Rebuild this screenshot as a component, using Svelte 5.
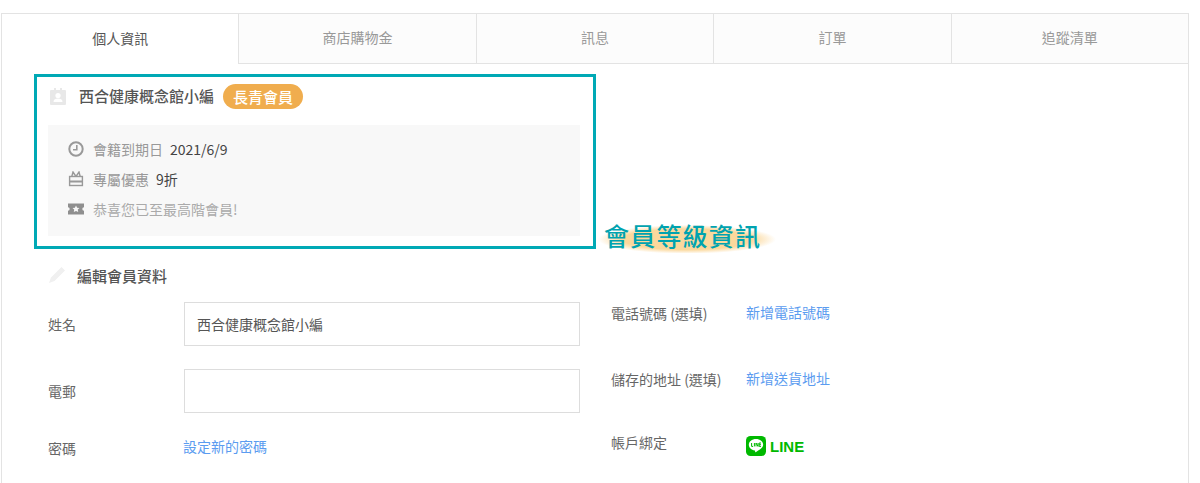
<script>
  const tabs = ['個人資訊', '商店購物金', '訊息', '訂單', '追蹤清單'];
  const activeTab = '個人資訊';
  let name = '西合健康概念館小編';
</script>

<div class="panel">
  <ul class="tabs">
    {#each tabs as tab}
      <li class:active={tab === activeTab}>{tab}</li>
    {/each}
  </ul>

  <section class="member">
    <div class="member-head">
      <svg class="id-icon" width="16" height="17" viewBox="0 0 16 17">
        <path fill="#e8e8e8" d="M1 2h3V0h2v2h4V0h2v2h3a1 1 0 0 1 1 1v13a1 1 0 0 1-1 1H1a1 1 0 0 1-1-1V3a1 1 0 0 1 1-1z" />
        <circle cx="8" cy="7.5" r="2.6" fill="#fff" />
        <path fill="#fff" d="M3.5 14c0-2.4 2-3.4 4.500-3.400s4.500 1 4.500 3.400z" />
      </svg>
      <span class="member-name">{name}</span>
      <span class="badge">長青會員</span>
    </div>
    <div class="perks">
      <div class="perk">
        <svg width="16" height="16" viewBox="0 0 16 16">
          <circle cx="8" cy="8" r="6.700" fill="none" stroke="#999" stroke-width="2" />
          <path d="M8.800 4v4.800H5" fill="none" stroke="#999" stroke-width="1.600" />
        </svg>
        <span class="label">會籍到期日</span>
        <span class="value">2021/6/9</span>
      </div>
      <div class="perk">
        <svg width="16" height="16" viewBox="0 0 16 16">
          <rect x="1.600" y="5.500" width="12.800" height="9" fill="none" stroke="#999" stroke-width="1.400" />
          <path d="M1.600 10.500h12.800" stroke="#999" stroke-width="2" />
          <path d="M8 5.500 5 1 3.800 5.500M8 5.500 11 1l1.200 4.500" fill="none" stroke="#999" stroke-width="1.400" />
        </svg>
        <span class="label">專屬優惠</span>
        <span class="value">9折</span>
      </div>
      <div class="perk">
        <svg width="16" height="16" viewBox="0 0 16 16">
          <path fill="#8f8f8f" d="M0 2.500h16v3.800a1.700 1.700 0 0 0 0 3.400v3.800H0V9.700a1.700 1.700 0 0 0 0-3.400z" />
          <path fill="#f7f7f7" d="m8 4.500 1.100 2.200 2.400.3-1.700 1.600.4 2.400L8 9.900 5.800 11l.4-2.400L4.500 7l2.400-.3z" />
        </svg>
        <span class="label light">恭喜您已至最高階會員!</span>
      </div>
    </div>
  </section>

  <div class="callout">會員等級資訊</div>

  <section class="edit">
    <h3>
      <svg width="18" height="18" viewBox="0 0 18 18">
        <path fill="#f0f0f0" d="M13.500 1 17 4.500 6.500 15 1 17l2-5.500z" />
      </svg>
      編輯會員資料
    </h3>
    <div class="form">
      <div class="col-left">
        <div class="row">
          <span class="field-label">姓名</span>
          <input type="text" bind:value={name} />
        </div>
        <div class="row">
          <span class="field-label">電郵</span>
          <input type="text" />
        </div>
        <div class="row plain">
          <span class="field-label">密碼</span>
          <a href="#password">設定新的密碼</a>
        </div>
      </div>
      <div class="col-right">
        <div class="info">
          <span class="field-label">電話號碼 (選填)</span>
          <a href="#phone">新增電話號碼</a>
        </div>
        <div class="info">
          <span class="field-label">儲存的地址 (選填)</span>
          <a href="#address">新增送貨地址</a>
        </div>
        <div class="info last">
          <span class="field-label">帳戶綁定</span>
          <span class="line">
            <svg width="20" height="20" viewBox="0 0 20 20">
              <rect width="20" height="20" rx="4.500" fill="#00b900" />
              <path fill="#fff" d="M10 3c-4 0-7.200 2.600-7.200 5.800 0 2.900 2.500 5.200 6 5.700.5.100.4.600.3 1.300 0 .5.500.5 1 .2 1.600-1 7.100-3.900 7.100-7.200C17.200 5.600 14 3 10 3z" />
              <path fill="none" stroke="#00b900" stroke-width="1" d="M5.600 7v3.400h1.500M8.400 7v3.400M10 10.400V7l2 3.400V7M15 7h-1.800v3.400H15M13.200 8.700H15" />
            </svg>
            <span class="line-word">LINE</span>
          </span>
        </div>
      </div>
    </div>
  </section>
</div>

<style>
  :global(body) {
    background: #fff;
    font-family: "Noto Sans CJK TC", "Noto Sans", sans-serif;
    overflow: hidden;
  }

  .panel {
    position: relative;
    box-sizing: border-box;
    width: 1188px;
    height: 470px;
    margin: 13px 0 0 1px;
    border: 1px solid #e3e3e3;
    border-bottom: 0;
    overflow: hidden;
  }

  .tabs {
    display: flex;
    height: 50px;
    margin: 0;
    padding: 0;
    list-style: none;
  }

  .tabs li {
    flex: 1;
    display: flex;
    align-items: center;
    justify-content: center;
    box-sizing: border-box;
    padding-bottom: 3px;
    background: #fcfcfc;
    border-left: 1px solid #e3e3e3;
    border-bottom: 1px solid #e3e3e3;
    color: #999;
    font-size: 14px;
  }

  .tabs li:first-child {
    border-left: 0;
  }

  .tabs li.active {
    background: #fff;
    border-bottom: 0;
    color: #555;
  }

  .member {
    box-sizing: border-box;
    width: 562px;
    height: 175px;
    margin: 10px 0 0 32px;
    padding: 0 13px 0 11px;
    border: 3px solid #00a9b5;
  }

  .member-head {
    display: flex;
    align-items: center;
    height: 38px;
    padding-left: 2px;
    margin-bottom: 10px;
  }

  .id-icon {
    margin-right: 13px;
  }

  .member-name {
    color: #555;
    font-size: 15px;
    font-weight: 500;
    line-height: 20px;
  }

  .badge {
    margin-left: 9px;
    padding: 0 10px;
    height: 25px;
    line-height: 25px;
    border-radius: 13px;
    background: #f0ad4e;
    color: #fff;
    font-size: 15px;
    font-weight: 500;
  }

  .perks {
    display: flex;
    flex-direction: column;
    gap: 10px;
    height: 111px;
    box-sizing: border-box;
    padding: 14px 20px 0;
    background: #f8f8f8;
  }

  .perk {
    display: flex;
    align-items: center;
    height: 20px;
    font-size: 14px;
  }

  .perk svg {
    margin-right: 9px;
  }

  .label {
    color: #999;
    margin-right: 7px;
  }

  .label.light {
    color: #aaa;
  }

  .value {
    color: #444;
  }

  .callout {
    position: absolute;
    left: 596px;
    top: 203px;
    padding: 0 15px 0 6px;
    color: #00a3b0;
    font-size: 25px;
    font-weight: 500;
    letter-spacing: 1.200px;
    line-height: 36px;
    background: radial-gradient(ellipse 50% 40% at 50% 62%, #fbd89c 72%, rgba(251, 216, 156, 0) 100%);
  }

  .edit {
    padding: 13px 0 0 46px;
  }

  .edit h3 {
    display: flex;
    align-items: center;
    gap: 11px;
    margin: 0 0 14px;
    height: 26px;
    color: #555;
    font-size: 15px;
    font-weight: 500;
  }

  .form {
    display: flex;
  }

  .col-left {
    width: 532px;
    flex: none;
  }

  .row {
    display: flex;
    align-items: center;
    height: 44px;
    margin-bottom: 23px;
  }

  .row.plain {
    height: 20px;
    margin-top: 22px;
  }

  .row .field-label {
    width: 136px;
    flex: none;
  }

  .row.plain .field-label {
    padding-top: 4px;
  }

  .row.plain a {
    margin: -1px 0 0 -1px;
  }

  .field-label {
    color: #666;
    font-size: 14px;
    line-height: 20px;
  }

  input {
    box-sizing: border-box;
    flex: 1;
    min-width: 0;
    height: 44px;
    padding: 0 12px;
    border: 1px solid #ddd;
    background: #fff;
    color: #555;
    font: inherit;
    font-size: 14px;
    outline: none;
  }

  a {
    color: #5b9cf0;
    font-size: 14px;
    text-decoration: none;
  }

  .col-right {
    margin-left: 31px;
  }

  .info {
    display: flex;
    align-items: center;
    height: 20px;
    margin-bottom: 46px;
    width: 240px;
  }

  .info .field-label {
    width: 135px;
    flex: none;
    white-space: nowrap;
    padding-top: 1px;
  }

  .info a {
    margin-top: -1px;
    white-space: nowrap;
  }

  .info.last {
    margin-top: -3px;
  }

  .line {
    display: flex;
    align-items: center;
    gap: 4px;
    margin-top: 10px;
  }

  .line-word {
    color: #00b900;
    font-family: "Liberation Sans", sans-serif;
    font-size: 15px;
    font-weight: 700;
  }
</style>
